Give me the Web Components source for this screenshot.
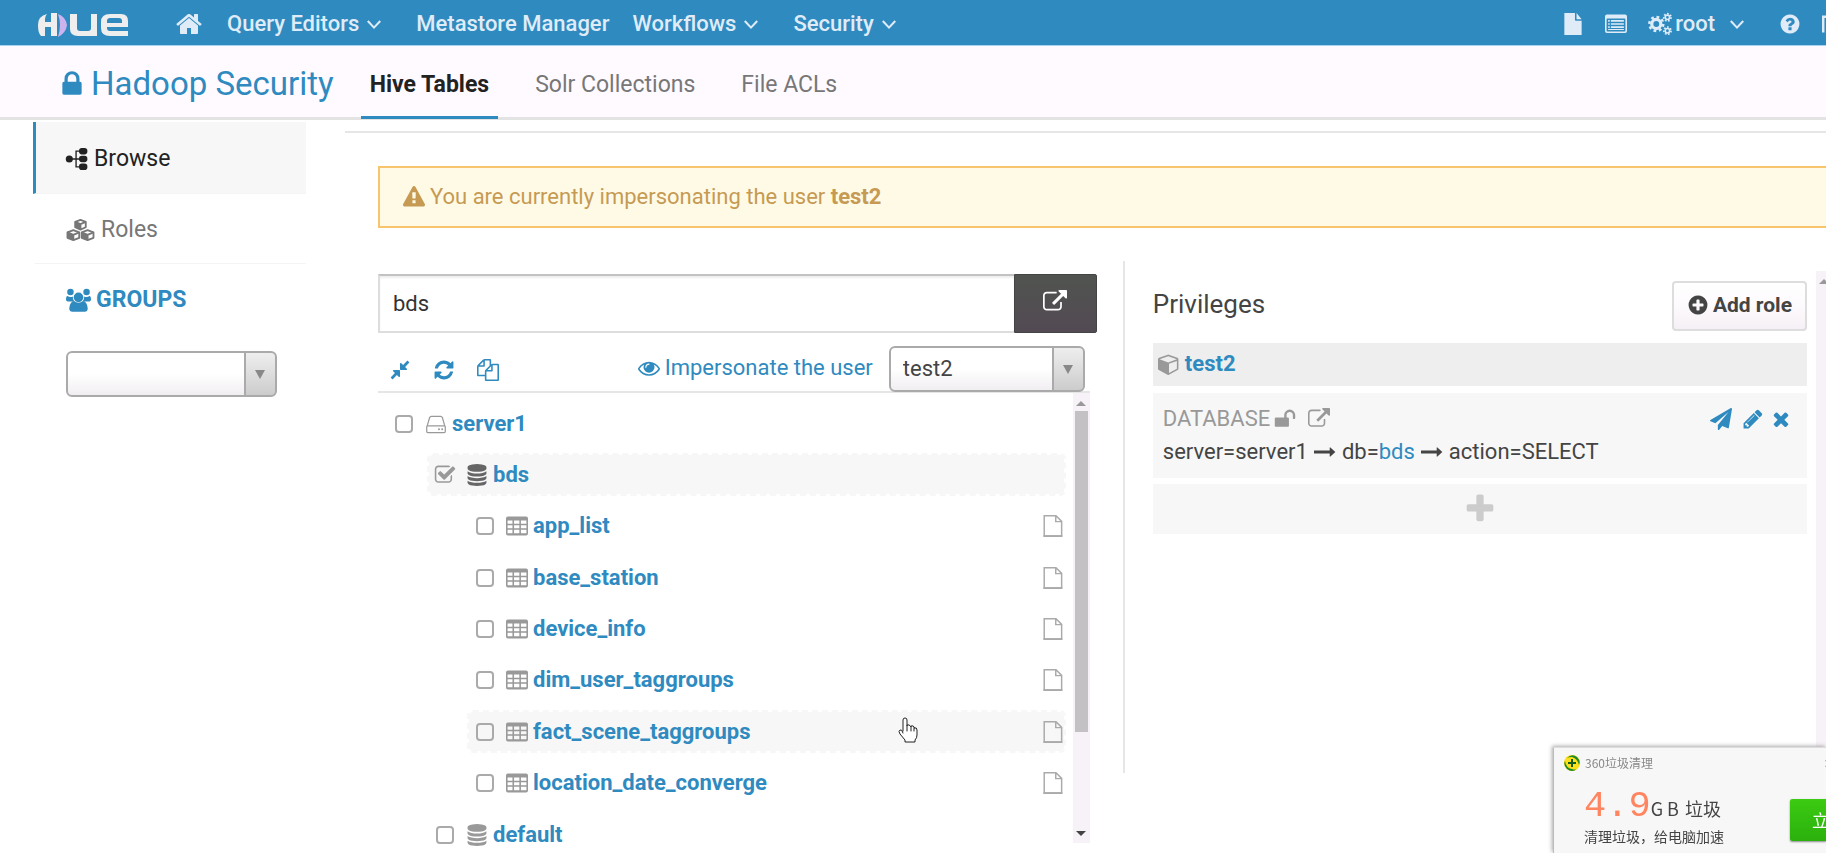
<!DOCTYPE html>
<html lang="en">
<head>
<meta charset="utf-8">
<title>Hue - Hadoop Security</title>
<style>
  html, body { margin: 0; height: 100%; }
  body {
    font: 22px/28px Roboto, "Liberation Sans", sans-serif;
    color: #444; background: #fff; overflow: hidden;
    --blue: #2f8abf; --line: #e6e6e6; --soft: #f7f7f7; --grey: #999;
  }
</style>
</head>
<body>
<hue-app></hue-app>

<script>
const ICONS = {
  home: '<path d="M1472 992v480q0 26-19 45t-45 19h-384v-384h-256v384h-384q-26 0-45-19t-19-45v-480q0-1 .5-3t.5-3l575-474 575 474q1 2 1 6zm223-69l-62 74q-8 9-21 11h-3q-13 0-21-7l-692-577-692 577q-12 8-24 7-13-2-21-11l-62-74q-8-10-7-23.5t11-21.5l719-599q32-26 76-26t76 26l244 204v-195q0-14 9-23t23-9h192q14 0 23 9t9 23v408l219 182q10 8 11 21.5t-7 23.5z"/>',
  chevron: '<path d="M200 560l696 740 696-740" fill="none" stroke="currentColor" stroke-width="230"/>',
  file: '<path d="M192 0h864v544q0 40 28 68t68 28h448v1152h-1408zM1184 0l416 512h-416z"/>',
  list: '<path fill-rule="evenodd" d="M160 128h1472q160 0 160 160v1184q0 160-160 160h-1472q-160 0-160-160v-1184q0-160 160-160zM192 448q-64 0-64 64v928q0 64 64 64h1408q64 0 64-64v-928q0-64-64-64zM256 576h128v128h-128zM480 576h1056v128h-1056zM256 832h128v128h-128zM480 832h1056v128h-1056zM256 1088h128v128h-128zM480 1088h1056v128h-1056zM256 1312h1280v64h-1280z"/>',
  cogs: '<g fill="none" stroke="currentColor"><circle cx="620" cy="896" r="340" stroke-width="240"/><circle cx="620" cy="896" r="520" stroke-width="190" stroke-dasharray="204 204.4"/><circle cx="1450" cy="400" r="165" stroke-width="120"/><circle cx="1450" cy="400" r="270" stroke-width="130" stroke-dasharray="121 121.3"/><circle cx="1450" cy="1400" r="165" stroke-width="120"/><circle cx="1450" cy="1400" r="270" stroke-width="130" stroke-dasharray="121 121.3"/></g>',
  help: '<path d="M1024 1376v-192q0-14-9-23t-23-9h-192q-14 0-23 9t-9 23v192q0 14 9 23t23 9h192q14 0 23-9t9-23zm256-672q0-88-55.500-163t-138.500-116-170-41q-243 0-371 213-15 24 8 42l132 100q7 6 19 6 16 0 25-12 53-68 86-92 34-24 86-24 48 0 85.500 26t37.500 59q0 38-20 61t-68 45q-63 28-115.500 86.500t-52.500 125.500v36q0 14 9 23t23 9h192q14 0 23-9t9-23q0-19 21.500-49.500t54.500-49.500q32-18 49-28.500t46-35 44.500-48 28-60.500 12.500-81zm384 192q0 209-103 385.500t-279.500 279.500-385.500 103-385.500-103-279.500-279.500-103-385.500 103-385.500 279.500-279.500 385.500-103 385.500 103 279.500 279.500 103 385.500z"/>',
  flag: '<path d="M0 200h1792v200h-1592v1192h-200z"/>',
  lock: '<path d="M640 768h512v-192q0-106-75-181t-181-75-181 75-75 181v192zm832 96v576q0 40-28 68t-68 28h-960q-40 0-68-28t-28-68v-576q0-40 28-68t68-28h32v-192q0-184 132-316t316-132 316 132 132 316v192h32q40 0 68 28t28 68z"/>',
  unlock: '<path d="M1728 576v256q0 26-19 45t-45 19h-64q-26 0-45-19t-19-45v-256q0-106-75-181t-181-75-181 75-75 181v192h96q40 0 68 28t28 68v576q0 40-28 68t-68 28h-960q-40 0-68-28t-28-68v-576q0-40 28-68t68-28h672v-192q0-185 131.500-316.500t316.500-131.500 316.500 131.500 131.500 316.500z"/>',
  sitemap: '<g><circle cx="270" cy="896" r="290"/><rect x="1060" y="0" width="680" height="520" rx="230"/><rect x="1060" y="636" width="680" height="520" rx="230"/><rect x="1060" y="1272" width="680" height="520" rx="230"/><path d="M270 896h900M1200 250h-380v1292h380" fill="none" stroke="currentColor" stroke-width="110"/></g>',
  cubes: '<g fill="none" stroke="currentColor" stroke-width="150" stroke-linejoin="round"><path d="M1150 70l430 160v440l-430 190-430-190v-440z"/><path d="M720 230l430 180 430-180M1150 410v450"/><path d="M570 900l480 190v440l-480 190-480-190v-440z"/><path d="M90 1090l480 200 480-200M570 1290v430"/><path d="M1730 900l480 190v440l-480 190-480-190v-440z"/><path d="M1250 1090l480 200 480-200M1730 1290v430"/></g><path d="M720 230l430 180v450l-430-190zM90 1090l480 200v430l-480-190zM1250 1090l480 200v430l-480-190z"/>',
  users: '<circle cx="340" cy="290" r="250"/><circle cx="1580" cy="290" r="250"/><path d="M120 580q100 80 220 80 90 0 180-40-20 260 130 400h-450q-200 0-200-190 0-240 120-250zM1800 580q-100 80-220 80-90 0-180-40 20 260-130 400h450q200 0 200-190 0-240-120-250z"/><circle cx="960" cy="690" r="370"/><path d="M620 980q150 130 340 130t340-130q300 20 370 540 0 270-250 270h-920q-250 0-250-270 70-520 370-540z"/>',
  warning: '<path d="M1024 1375v-190q0-14-9.500-23.500t-22.500-9.500h-192q-13 0-22.500 9.500t-9.500 23.500v190q0 14 9.500 23.500t22.500 9.500h192q13 0 22.500-9.500t9.500-23.500zm-2-374l18-459q0-12-10-19-13-11-24-11h-220q-11 0-24 11-10 7-10 21l17 457q0 10 10 16.500t24 6.500h185q14 0 23.500-6.500t10.500-16.500zm-14-934l768 1408q35 63-2 126-17 29-46.500 46t-63.500 17h-1536q-34 0-63.500-17t-46.500-46q-37-63-2-126l768-1408q17-31 47-49t65-18 65 18 47 49z"/>',
  external: '<path d="M1408 928v320q0 119-84.500 203.500t-203.500 84.500h-832q-119 0-203.500-84.500t-84.500-203.500v-832q0-119 84.500-203.500t203.500-84.500h704q14 0 23 9t9 23v64q0 14-9 23t-23 9h-704q-66 0-113 47t-47 113v832q0 66 47 113t113 47h832q66 0 113-47t47-113v-320q0-14 9-23t23-9h64q14 0 23 9t9 23zm384-864v512q0 26-19 45t-45 19-45-19l-176-176-652 652q-10 10-23 10t-23-10l-114-114q-10-10-10-23t10-23l652-652-176-176q-19-19-19-45t19-45 45-19h512q26 0 45 19t19 45z"/>',
  compress: '<path d="M896 960v448q0 26-19 45t-45 19-45-19l-144-144-332 332q-10 10-23 10t-23-10l-114-114q-10-10-10-23t10-23l332-332-144-144q-19-19-19-45t19-45 45-19h448q26 0 45 19t19 45zm755-672q0 13-10 23l-332 332 144 144q19 19 19 45t-19 45-45 19h-448q-26 0-45-19t-19-45v-448q0-26 19-45t45-19 45 19l144 144 332-332q10-10 23-10t23 10l114 114q10 10 10 23z"/>',
  refresh: '<path d="M1639 1056q0 5-1 7-64 268-268 434.500t-478 166.500q-146 0-282.500-55t-243.500-157l-129 129q-19 19-45 19t-45-19-19-45v-448q0-26 19-45t45-19h448q26 0 45 19t19 45-19 45l-137 137q71 66 161 102t187 36q134 0 250-65t186-179q11-17 53-117 8-23 30-23h192q13 0 22.500 9.500t9.500 22.500zm25-800v448q0 26-19 45t-45 19h-448q-26 0-45-19t-19-45 19-45l138-138q-148-137-349-137-134 0-250 65t-186 179q-11 17-53 117-8 23-30 23h-199q-13 0-22.500-9.500t-9.500-22.500v-7q65-268 270-434.500t480-166.500q146 0 284 55.500t245 156.500l130-129q19-19 45-19t45 19 19 45z"/>',
  copy: '<path d="M1696 384q40 0 68 28t28 68v1216q0 40-28 68t-68 28h-960q-40 0-68-28t-28-68v-288h-544q-40 0-68-28t-28-68v-672q0-40 20-88t48-76l408-408q28-28 76-48t88-20h416q40 0 68 28t28 68v328q68-40 128-40h416zm-544 213l-299 299h299v-299zm-640-384l-299 299h299v-299zm196 647l316-316v-416h-384v416q0 40-28 68t-68 28h-416v640h512v-256q0-40 20-88t48-76zm956 804v-1152h-384v416q0 40-28 68t-68 28h-416v640h896z"/>',
  eye: '<path d="M1664 960q-152-236-381-353 61 104 61 225 0 185-131.500 316.500t-316.500 131.500-316.500-131.500-131.500-316.500q0-121 61-225-229 117-381 353 133 205 333.500 326.500t434.500 121.500 434.500-121.500 333.500-326.500zm-720-384q0-20-14-34t-34-14q-125 0-214.500 89.500t-89.500 214.500q0 20 14 34t34 14 34-14 14-34q0-86 61-147t147-61q20 0 34-14t14-34zm848 384q0 34-20 69-140 230-376.500 368.500t-499.500 138.500-499.500-139-376.500-368q-20-35-20-69t20-69q140-229 376.500-368t499.500-139 499.500 139 376.500 368q20 35 20 69z"/>',
  cube: '<path d="M896 1629l640-349v-636l-640 233v752zm-64-865l698-254-698-254-698 254zm832-252v768q0 35-18 65t-49 47l-704 384q-28 16-61 16t-61-16l-704-384q-31-17-49-47t-18-65v-768q0-40 23-73t61-47l704-256q22-8 44-8t44 8l704 256q38 14 61 47t23 73z"/>',
  database: '<path d="M896 768q237 0 443-43t325-127v170q0 69-103 128t-280 93.500-385 34.500-385-34.500-280-93.500-103-128v-170q119 84 325 127t443 43zm0 768q237 0 443-43t325-127v170q0 69-103 128t-280 93.500-385 34.500-385-34.500-280-93.500-103-128v-170q119 84 325 127t443 43zm0-384q237 0 443-43t325-127v170q0 69-103 128t-280 93.500-385 34.500-385-34.500-280-93.500-103-128v-170q119 84 325 127t443 43zm0-1152q208 0 385 34.500t280 93.500 103 128v128q0 69-103 128t-280 93.500-385 34.500-385-34.500-280-93.500-103-128v-128q0-69 103-128t280-93.500 385-34.500z"/>',
  table: '<path fill-rule="evenodd" d="M160 128h1472q160 0 160 160v1216q0 160-160 160h-1472q-160 0-160-160v-1216q0-160 160-160zM128 448v256h400v-256zM656 448v256h432v-256zM1216 448v256h448v-256zM128 832v240h400v-240zM656 832v240h432v-240zM1216 832v240h448v-240zM128 1200v280h400v-280zM656 1200v280h432v-280zM1216 1200v280h448v-280z"/>',
  server: '<g fill="none" stroke="currentColor" stroke-width="100"><path d="M180 1050l200-680q40-100 140-100h752q100 0 140 100l200 680"/><rect x="140" y="1040" width="1512" height="560" rx="90"/></g><circle cx="1140" cy="1320" r="80"/><circle cx="1400" cy="1320" r="80"/>',
  page: '<path d="M180 60h960l460 460v1200h-1420zM1120 60v480h480" fill="none" stroke="currentColor" stroke-width="120"/><path d="M120 1640h1540v152h-1540z"/>',
  plus: '<path d="M1600 736v192q0 40-28 68t-68 28h-416v416q0 40-28 68t-68 28h-192q-40 0-68-28t-28-68v-416h-416q-40 0-68-28t-28-68v-192q0-40 28-68t68-28h416v-416q0-40 28-68t68-28h192q40 0 68 28t28 68v416h416q40 0 68 28t28 68z"/>',
  add: '<path d="M1344 960v-128q0-26-19-45t-45-19h-256v-256q0-26-19-45t-45-19h-128q-26 0-45 19t-19 45v256h-256q-26 0-45 19t-19 45v128q0 26 19 45t45 19h256v256q0 26 19 45t45 19h128q26 0 45-19t19-45v-256h256q26 0 45-19t19-45zm320-64q0 209-103 385.500t-279.500 279.500-385.500 103-385.500-103-279.500-279.500-103-385.500 103-385.500 279.500-279.500 385.500-103 385.500 103 279.500 279.500 103 385.500z"/>',
  times: '<path d="M1490 1322q0 40-28 68l-136 136q-28 28-68 28t-68-28l-294-294-294 294q-28 28-68 28t-68-28l-136-136q-28-28-28-68t28-68l294-294-294-294q-28-28-28-68t28-68l136-136q28-28 68-28t68 28l294 294 294-294q28-28 68-28t68 28l136 136q28 28 28 68t-28 68l-294 294 294 294q28 28 28 68z"/>',
  pencil: '<path d="M491 1536l91-91-235-235-91 91v107h128v128h107zm523-928q0-22-22-22-10 0-17 7l-542 542q-7 7-7 17 0 22 22 22 10 0 17-7l542-542q7-7 7-17zm-54-192l416 416-832 832h-416v-416zm683 96q0 53-37 90l-166 166-416-416 166-165q36-38 90-38 53 0 91 38l235 234q37 39 37 91z"/>',
  plane: '<path d="M1764 11q33 24 27 64l-256 1536q-5 29-32 45-14 8-31 8-11 0-24-5l-453-185-242 295q-18 23-49 23-13 0-22-4-19-7-30.500-23.500t-11.500-36.500v-349l864-1059-1069 925-395-162q-37-14-40-55-2-40 32-59l1664-960q15-9 32-9 20 0 36 11z"/>',
  arrow: '<path d="M1728 893q0 14-10 24l-384 354q-16 14-35 6-19-9-19-29v-224h-1248q-14 0-23-9t-9-23v-192q0-14 9-23t23-9h1248v-224q0-21 19-29t35 5l384 350q10 10 10 23z"/>',
  checked: '<path d="M1472 930v318q0 119-84.500 203.500t-203.500 84.500h-832q-119 0-203.500-84.500t-84.500-203.500v-832q0-119 84.500-203.500t203.500-84.500h832q63 0 117 25 15 7 18 23 3 17-9 29l-49 49q-10 10-23 10-3 0-9-2-23-6-45-6h-832q-66 0-113 47t-47 113v832q0 66 47 113t113 47h832q66 0 113-47t47-113v-254q0-13 9-22l64-64q10-10 23-10 6 0 12 3 20 8 20 29zm231-489l-814 814q-24 24-57 24t-57-24l-430-430q-24-24-24-57t24-57l110-110q24-24 57-24t57 24l263 263 647-647q24-24 57-24t57 24l110 110q24 24 24 57t-24 57z"/>'
};

const BASE = `<style>
  *, *::before, *::after { box-sizing: border-box; }
  a { color: inherit; text-decoration: none; }
  button, input, select { font: inherit; color: inherit; margin: 0; }
</style>`;

/* Drop-down with a bordered arrow button, shared by the sidebar and the tree toolbar */
const SELECT = `<style>
  .pick { position: relative; display: block; height: 46px; }
  .pick select {
    appearance: none; width: 100%; height: 100%; padding: 0 40px 0 12px;
    border: 2px solid #aaa; border-radius: 6px; outline: 0;
    background: linear-gradient(#eee, #ccc) right / 29px 100% no-repeat,
      linear-gradient(#aaa, #aaa) right 29px top / 2px 100% no-repeat,
      linear-gradient(#fff 50%, #f1eef1);
  }
  .pick::after {
    content: ""; position: absolute; right: 12px; top: 19px; pointer-events: none;
    border: 5px solid transparent; border-top: 9px solid #888; border-bottom: 0;
  }
</style>`;

function define(name, html, setup) {
  const template = document.createElement('template');
  template.innerHTML = BASE + html;
  customElements.define(name, class extends HTMLElement {
    constructor() {
      super();
      this.attachShadow({ mode: 'open' }).append(template.content.cloneNode(true));
    }
    connectedCallback() { if (setup) setup(this, this.shadowRoot); }
  });
}

define('hue-icon', `<style>
  :host { display: inline-block; flex: none; width: 22px; height: 22px; }
  svg { display: block; width: 100%; height: 100%; fill: currentColor; overflow: visible; }
</style><svg aria-hidden="true"></svg>`, (el, root) => {
  const name = el.getAttribute('name');
  const svg = root.querySelector('svg');
  svg.setAttribute('viewBox', name === 'cubes' ? '0 0 2304 1792' : name === 'users' ? '0 0 1920 1792' : '0 0 1792 1792');
  svg.innerHTML = ICONS[name];
});

define('hue-logo', `<style>
  :host { display: block; width: 92px; height: 24px; }
  svg { display: block; width: 100%; height: 100%; }
</style>
<svg viewBox="0 0 92 24" role="img" aria-label="Hue">
  <path d="M10 1Q1 3 1 12 1 20 4 23H8V14H14V23H20V0H14V9H8V6Q8 3 10 1Z" fill="#eee"/>
  <path d="M21 1Q29 4 30 12 29 20 21 24 25 12 21 1Z" fill="#cdb3ee"/>
  <path d="M33 1h7v14q0 3 3 3h8q3 0 3-3V1h6v22H41q-8 0-8-7Z" fill="#eee"/>
  <path d="M91 14H70v1q0 3 3 3h18v5H73q-9 0-9-8V9q0-8 9-8h11q7 0 7 7v6ZM70 10h15V8q0-3-3-3H73q-3 0-3 3Z" fill="#eee" fill-rule="evenodd"/>
</svg>`);

define('hue-navbar', `<style>
  :host {
    display: flex; align-items: center; height: 46px; padding: 0 0 4px 37px;
    background: var(--blue); border-bottom: 1px solid #a8d3ec; color: #dfecf8; font-weight: 500;
  }
  hue-logo { margin: 8px 46px 0 0; }
  a { display: flex; align-items: center; white-space: nowrap; }
  .home { width: 28px; height: 28px; }
  nav, .tools { display: flex; align-items: center; padding-top: 6px; }
  nav { gap: 34px; flex: 1; }
  .tight { margin-left: -11px; }
  .chev { width: 16px; height: 16px; margin-left: 7px; }
  nav a:first-child { margin-right: -10px; }
  .tools { gap: 21px; }
  .tools .chev { margin-left: 14px; }
  .root { margin-right: 13px; }
  .root hue-icon:first-child { width: 24px; height: 24px; margin-right: 3px; }
  .edge { width: 4px; overflow: hidden; }
</style>
<hue-logo></hue-logo>
<nav aria-label="Main">
  <a href="#home" aria-label="Home"><hue-icon class="home" name="home"></hue-icon></a>
  <a href="#query">Query Editors<hue-icon class="chev" name="chevron"></hue-icon></a>
  <a href="#metastore">Metastore Manager</a>
  <a href="#workflows" class="tight">Workflows<hue-icon class="chev" name="chevron"></hue-icon></a>
  <a href="#security">Security<hue-icon class="chev" name="chevron"></hue-icon></a>
</nav>
<div class="tools">
  <a href="#files" aria-label="File browser"><hue-icon name="file"></hue-icon></a>
  <a href="#jobs" aria-label="Job browser"><hue-icon name="list"></hue-icon></a>
  <a href="#root" class="root"><hue-icon name="cogs"></hue-icon>root<hue-icon class="chev" name="chevron"></hue-icon></a>
  <a href="#help" aria-label="Help"><hue-icon name="help"></hue-icon></a>
  <a href="#tour" class="edge" aria-label="Tour"><hue-icon name="flag"></hue-icon></a>
</div>`);

define('hue-subnav', `<style>
  :host {
    display: flex; align-items: stretch; height: 74px; padding-left: 57px;
    background: #fefaff; border-bottom: 3px solid #e3e3e3; color: #777;
  }
  h1 { display: flex; align-items: center; margin: 0 27px 0 0; padding-top: 5px; font-size: 33px; font-weight: 400; color: var(--blue); white-space: nowrap; }
  h1 hue-icon { width: 30px; height: 30px; margin-right: 4px; }
  nav { display: flex; gap: 28px; margin-bottom: -2px; }
  a { display: flex; align-items: center; padding: 7px 9px 0; border-bottom: 3px solid transparent; white-space: nowrap; font-size: 23px; }
  a[aria-current] { color: #222; font-weight: 700; border-color: var(--blue); }
</style>
<h1><hue-icon name="lock"></hue-icon>Hadoop Security</h1>
<nav aria-label="Security"><a href="#hive" aria-current="page">Hive Tables</a><a href="#solr">Solr Collections</a><a href="#acls">File ACLs</a></nav>`);

define('hue-sidebar', SELECT + `<style>
  :host { display: block; }
  nav a {
    display: flex; align-items: center; gap: 6px; height: 70px; padding: 2px 0 0 30px;
    border-left: 3px solid transparent; border-bottom: 1px solid #f4f4f4; color: #777; font-size: 23px;
  }
  nav a[aria-current] { height: 72px; color: #222; background: var(--soft); border-left-color: var(--blue); }
  .cubes { width: 29px; }
  label { display: flex; align-items: center; gap: 5px; height: 70px; padding: 2px 0 0 33px; color: var(--blue); font-weight: 700; font-size: 23px; }
  label hue-icon { width: 25px; height: 24px; }
  .pick { margin: 17px 29px 0 33px; }
</style>
<nav aria-label="Sections">
  <a href="#browse" aria-current="page"><hue-icon name="sitemap"></hue-icon>Browse</a>
  <a href="#roles"><hue-icon class="cubes" name="cubes"></hue-icon>Roles</a>
</nav>
<label for="group"><hue-icon name="users"></hue-icon>GROUPS</label>
<span class="pick"><select id="group"><option></option></select></span>`);

define('hue-alert', `<style>
  :host {
    display: flex; align-items: center; gap: 5px; height: 62px; padding: 0 23px 1px;
    border: 2px solid #f9c56c; border-right: 0; background: #fffae6; color: #c69a53;
  }
</style><hue-icon name="warning"></hue-icon><span><slot></slot></span>`);

define('hue-tree-row', `<style>
  :host { display: block; height: 43px; margin-left: 8px; }
  :host([level="1"]) { margin-left: 49px; }
  :host([level="2"]) { margin-left: 89px; }
  div {
    display: flex; align-items: center; height: 100%; padding: 0 0 0 7px;
    border: 2px dashed transparent; border-radius: 6px; background-clip: padding-box;
  }
  :host([active]) div { background-color: var(--soft); border-color: var(--soft); }
  input { appearance: none; flex: none; width: 18px; height: 18px; border: 2px solid #aaa; border-radius: 4px; background: transparent; }
  .mark { display: none; position: absolute; width: 22px; height: 22px; color: var(--grey); pointer-events: none; }
  .box { position: relative; display: flex; width: 30px; }
  :host([checked]) input { opacity: 0; }
  :host([checked]) .mark { display: block; left: -2px; top: -2px; }
  .kind { color: var(--grey); margin-right: 5px; }
  :host([checked]) .kind { color: #666; }
  a { color: var(--blue); font-weight: 700; line-height: 18px; }
  .page { display: none; margin-left: auto; color: #aaa; }
  :host([level="2"]) .page { display: block; }
</style>
<div><span class="box"><input type="checkbox" aria-labelledby="name"><hue-icon class="mark" name="checked"></hue-icon></span><a id="name" href="#item"><slot></slot></a><hue-icon class="page" name="page"></hue-icon></div>`,
(el, root) => {
  const kind = document.createElement('hue-icon');
  kind.className = 'kind';
  kind.setAttribute('name', el.getAttribute('kind'));
  root.querySelector('.box').after(kind);
  root.querySelector('input').checked = el.hasAttribute('checked');
});

define('hue-scrollbar', `<style>
  :host { display: flex; flex-direction: column; align-items: center; width: 17px; height: 100%; background: #f7f2f7; }
  .up, .down { flex: none; border: 5px solid transparent; border-top: 0; border-bottom: 5px solid #999; margin: 8px 0 5px; }
  .down { border-bottom: 0; border-top: 5px solid #444; margin: auto 0 7px; }
  .thumb { width: 13px; height: 321px; background: #c4c1c5; }
  :host([bare]) .thumb { display: none; }
</style><div class="up"></div><div class="thumb"></div><div class="down"></div>`);

define('hue-browser', SELECT + `<style>
  :host { display: block; padding-top: 13px; min-width: 0; }
  .search { display: flex; height: 59px; }
  .search input {
    flex: 1; min-width: 0; padding: 0 13px; outline: 0; border: 2px solid #ddd; border-top-color: #c4c1c5; border-right: 0;
    background: #fff; color: #333; box-shadow: inset 0 2px 2px #eee;
  }
  .search button {
    display: grid; place-items: center; width: 83px; padding: 0 0 3px; border: 1px solid #444; border-radius: 0 2px 2px 0;
    background: linear-gradient(#50544f, #534a54); color: #fff;
  }
  .search button hue-icon { width: 24px; height: 24px; }
  .bar { display: flex; align-items: flex-start; height: 60px; padding: 13px 12px 0 11px; margin-right: 7px; color: var(--blue); border-bottom: 2px solid var(--line); }
  .bar button { display: flex; padding: 0; border: 0; background: none; margin: 13px 22px 0 0; }
  .bar a { display: flex; align-items: center; gap: 5px; margin: 8px 16px 0 auto; white-space: nowrap; }
  .bar .pick { width: 196px; margin-right: -7px; color: #444; }
  .view { display: flex; height: 450px; margin-right: 7px; }
  .rows { display: flex; flex-direction: column; justify-content: space-between; flex: 1; height: 454px; margin: 9px 7px 0 0; flex-shrink: 0; }
</style>
<div class="search"><input type="text" value="bds" aria-label="Path"><button aria-label="Open path"><hue-icon name="external"></hue-icon></button></div>
<div class="bar">
  <button aria-label="Collapse"><hue-icon name="compress"></hue-icon></button>
  <button aria-label="Refresh"><hue-icon name="refresh"></hue-icon></button>
  <button aria-label="Bulk edit"><hue-icon name="copy"></hue-icon></button>
  <a href="#impersonate" id="who"><hue-icon name="eye"></hue-icon>Impersonate the user</a>
  <span class="pick"><select aria-labelledby="who"><option>test2</option></select></span>
</div>
<div class="view">
  <div class="rows">
    <hue-tree-row kind="server">server1</hue-tree-row>
    <hue-tree-row level="1" kind="database" checked active>bds</hue-tree-row>
    <hue-tree-row level="2" kind="table">app_list</hue-tree-row>
    <hue-tree-row level="2" kind="table">base_station</hue-tree-row>
    <hue-tree-row level="2" kind="table">device_info</hue-tree-row>
    <hue-tree-row level="2" kind="table">dim_user_taggroups</hue-tree-row>
    <hue-tree-row level="2" kind="table" active>fact_scene_taggroups</hue-tree-row>
    <hue-tree-row level="2" kind="table">location_date_converge</hue-tree-row>
    <hue-tree-row level="1" kind="database">default</hue-tree-row>
  </div>
  <hue-scrollbar></hue-scrollbar>
</div>`);

define('hue-privileges', `<style>
  :host { display: flex; min-width: 0; }
  section { flex: 1; min-width: 0; height: 512px; padding: 20px 9px 0 28px; border-left: 2px solid var(--line); }
  header { display: flex; justify-content: space-between; align-items: center; height: 50px; margin-bottom: 12px; }
  h2 { margin: 0 0 5px; font-size: 26px; font-weight: 400; }
  header button {
    display: flex; align-items: center; gap: 4px; height: 50px; padding: 0 13px 2px; white-space: nowrap; font-weight: 700; font-size: 21px;
    border: 2px solid #ddd; border-radius: 4px; background: linear-gradient(#fff, #fdfafd 50%, #f5f0f5);
  }
  header hue-icon { color: #444; }
  .role { display: flex; align-items: center; gap: 5px; height: 43px; padding: 0 5px 1px; background: #eee; color: var(--blue); font-weight: 700; }
  .role hue-icon, .what { color: var(--grey); }
  .grant { display: flex; justify-content: space-between; height: 85px; margin: 7px 0 6px; padding: 11px 15px 0 10px; background: var(--soft); }
  .what, .path { display: flex; align-items: center; height: 30px; white-space: nowrap; }
  .what hue-icon { margin-left: 4px; }
  .what a { display: flex; margin-left: 8px; }
  .path { gap: 6px; margin-top: 3px; }
  .path a { color: var(--blue); }
  .acts { display: flex; gap: 10px; margin-top: 4px; color: var(--blue); height: 22px; }
  .acts button, .more { display: flex; padding: 0; border: 0; background: none; }
  .acts button:last-child { margin-left: -4px; }
  .more { width: 100%; height: 50px; background: var(--soft); justify-content: center; padding-top: 8px; color: #ccc; }
  .more hue-icon { width: 34px; height: 34px; }
  aside { width: 10px; height: 592px; margin-top: 10px; overflow: hidden; }
</style>
<section>
  <header><h2>Privileges</h2><button><hue-icon name="add"></hue-icon>Add role</button></header>
  <div class="role"><hue-icon name="cube"></hue-icon><a href="#test2">test2</a></div>
  <div class="grant">
    <div>
      <div class="what">DATABASE<hue-icon name="unlock"></hue-icon><a href="#open" aria-label="Open"><hue-icon name="external"></hue-icon></a></div>
      <div class="path"><span>server=server1</span><hue-icon name="arrow"></hue-icon><span>db=<a href="#bds">bds</a></span><hue-icon name="arrow"></hue-icon><span>action=SELECT</span></div>
    </div>
    <div class="acts"><button aria-label="Send"><hue-icon name="plane"></hue-icon></button><button aria-label="Edit"><hue-icon name="pencil"></hue-icon></button><button aria-label="Delete"><hue-icon name="times"></hue-icon></button></div>
  </div>
  <button class="more" aria-label="Add privilege"><hue-icon name="plus"></hue-icon></button>
</section>
<aside><hue-scrollbar bare></hue-scrollbar></aside>`);

define('cleaner-toast', `<style>
  :host {
    position: fixed; right: 0; bottom: 0; width: 273px; height: 106px; padding: 6px 0 0 10px; overflow: hidden;
    background: #f7f7f7; color: #444; border-left: 1px solid #bbb; border-top: 1px solid #ddd; box-shadow: -1px -1px 4px #aaa;
    font: 14px/20px "Noto Sans CJK SC", sans-serif; white-space: nowrap;
  }
  .top { display: flex; align-items: center; height: 18px; font-size: 12px; color: #888; }
  .top svg { width: 17px; height: 17px; margin-right: 4px; }
  .top button { margin-left: auto; width: 3px; height: 14px; padding: 0; border: 0; background: none; overflow: hidden; display: flex; }
  .top hue-icon { width: 14px; height: 14px; }
  .main { display: flex; justify-content: space-between; }
  .text { padding: 14px 0 0 20px; }
  .size { display: flex; align-items: baseline; height: 40px; font-size: 18px; line-height: 40px; gap: 6px; }
  .size b { font: 37px/40px "Liberation Mono", monospace; color: #ff8560; margin-right: -6px; }
  .go { width: 36px; height: 42px; margin-top: 27px; padding: 0 0 0 22px; overflow: hidden; border: 0; border-radius: 2px 0 0 2px; background: linear-gradient(#3ccb12, #2bb00d); color: #fff; font-size: 17px; box-shadow: 0 1px 2px #888; }
</style>
<div class="top"><svg viewBox="0 0 17 17" aria-hidden="true"><circle cx="8" cy="8" r="8" fill="#fde01a"/><path d="M3 3Q8-2 13 2 17 6 15 10 13 3 8 2 5 2 3 3ZM13 14Q8 18 3 14-1 10 1 6 2 13 8 14 11 15 13 14Z" fill="#1e8a2c"/><path d="M7 4h2v3h3v2h-3v3H7v-3H4V7h3Z" fill="#145c22"/></svg>360垃圾清理<button aria-label="Close"><hue-icon name="times"></hue-icon></button></div>
<div class="main"><div class="text"><div class="size"><b>4.9</b><span>G B</span><span>垃圾</span></div>清理垃圾，给电脑加速</div><button class="go">立</button></div>`);

define('hand-cursor', `<style>
  :host { position: fixed; left: 49%; bottom: 110px; width: 20px; height: 26px; margin-left: 3px; pointer-events: none; }
  svg { display: block; }
</style><svg width="20" height="26" viewBox="0 0 20 26" aria-hidden="true"><path d="M5 14V3q0-2 2-2t2 2v6q0-2 2-1t2 2q0-2 2-1t1 2q3-1 3 2v5q0 3-2 5v2H7v-2L2 17q-2-3 0-4t3 3M9 9v5M13 10v4M16 11v3" fill="#fff" stroke="#222" stroke-linejoin="round" stroke-linecap="round"/></svg>`);

define('hue-app', `<style>
  :host { display: block; }
  .body { display: grid; grid-template-columns: 273px minmax(0, 1fr); gap: 39px; padding: 2px 0 0 33px; }
  main { padding: 9px 0 0 33px; }
  hr { height: 2px; margin: 0 0 33px -33px; border: 0; background: var(--line); }
  .cols { display: grid; grid-template-columns: minmax(0, 46fr) minmax(0, 45fr); gap: 26px; padding-top: 33px; }
</style>
<hue-navbar></hue-navbar>
<hue-subnav></hue-subnav>
<div class="body">
  <hue-sidebar></hue-sidebar>
  <main>
    <hr>
    <hue-alert>You are currently impersonating the user <strong>test2</strong></hue-alert>
    <div class="cols"><hue-browser></hue-browser><hue-privileges></hue-privileges></div>
  </main>
</div>
<hand-cursor></hand-cursor>
<cleaner-toast></cleaner-toast>`);
</script>
</body>
</html>
